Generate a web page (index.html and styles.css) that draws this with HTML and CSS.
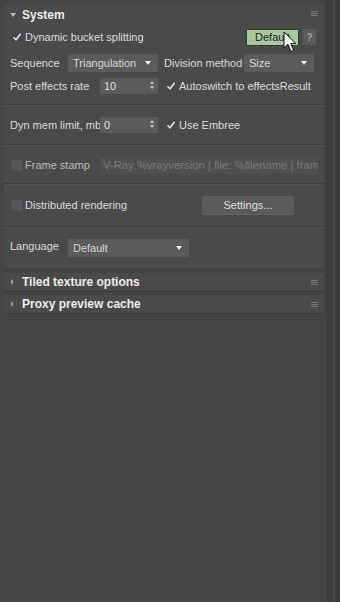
FILE: index.html
```html
<!DOCTYPE html>
<html>
<head>
<meta charset="utf-8">
<link rel="stylesheet" href="styles.css">
</head>
<body>
<div class="app">
  <div class="main">
    <section class="rollout">
      <div class="rhead">
        <span class="tri-down"></span>
        <span class="rtitle">System</span>
        <span class="grip"><i></i><i></i><i></i></span>
      </div>

      <div class="group g1">
        <div class="row r1">
          <span class="check on"><svg viewBox="0 0 10 10" width="10" height="10"><path d="M1.5 5.2 L4 7.8 L8.6 1.8" fill="none" stroke="#e6e6e6" stroke-width="1.6"/></svg></span>
          <span class="lbl">Dynamic bucket splitting</span>
          <span class="spacer"></span>
          <span class="btn-default">Default
            <svg class="cursor" viewBox="0 0 14 22" width="14" height="22"><path d="M1 1 L1 17 L5 13.2 L8 20.5 L10.6 19.4 L7.7 12.4 L12.8 12.4 Z" fill="#ffffff" stroke="#111" stroke-width="1"/></svg>
          </span>
          <span class="btn-help">?</span>
        </div>
        <div class="row r2">
          <span class="lbl w-seq">Sequence</span>
          <span class="dd dd-tri">Triangulation<span class="arr"></span></span>
          <span class="lbl w-div">Division method</span>
          <span class="dd dd-size">Size<span class="arr"></span></span>
        </div>
        <div class="row r3">
          <span class="lbl w-post">Post effects rate</span>
          <span class="spin">10<span class="spinarr"><i class="up"></i><i class="dn"></i></span></span>
          <span class="check on c2"><svg viewBox="0 0 10 10" width="10" height="10"><path d="M1.5 5.2 L4 7.8 L8.6 1.8" fill="none" stroke="#e6e6e6" stroke-width="1.6"/></svg></span>
          <span class="lbl">Autoswitch to effectsResult</span>
        </div>
      </div>

      <div class="group g2">
        <div class="row">
          <span class="lbl w-post clip">Dyn mem limit, mb</span>
          <span class="spin">0<span class="spinarr"><i class="up"></i><i class="dn"></i></span></span>
          <span class="check on c2"><svg viewBox="0 0 10 10" width="10" height="10"><path d="M1.5 5.2 L4 7.8 L8.6 1.8" fill="none" stroke="#e6e6e6" stroke-width="1.6"/></svg></span>
          <span class="lbl">Use Embree</span>
        </div>
      </div>

      <div class="group g3">
        <div class="row">
          <span class="check off"></span>
          <span class="lbl dis w-fs">Frame stamp</span>
          <span class="field">V-Ray %vrayversion | file: %filename | fram</span>
        </div>
      </div>

      <div class="group g4">
        <div class="row">
          <span class="check off"></span>
          <span class="lbl w-dr">Distributed rendering</span>
          <span class="btn">Settings...</span>
        </div>
      </div>

      <div class="group g5">
        <div class="row">
          <span class="lbl w-seq">Language</span>
          <span class="dd dd-lang">Default<span class="arr"></span></span>
        </div>
      </div>
    </section>

    <section class="rollout closed">
      <div class="rhead">
        <span class="tri-right"></span>
        <span class="rtitle">Tiled texture options</span>
        <span class="grip"><i></i><i></i><i></i></span>
      </div>
    </section>

    <section class="rollout closed">
      <div class="rhead">
        <span class="tri-right"></span>
        <span class="rtitle">Proxy preview cache</span>
        <span class="grip"><i></i><i></i><i></i></span>
      </div>
    </section>
  </div>
  <div class="scroll"><div class="track"></div></div>
</div>
</body>
</html>
```

FILE: styles.css
```css
* { box-sizing: border-box; }
html, body {
  margin: 0;
  padding: 0;
  background: #444444;
  width: 340px;
  height: 602px;
  overflow: hidden;
}
body {
  font-family: "Liberation Sans", Arial, sans-serif;
  font-size: 11px;
  color: #dcdcdc;
}
.app {
  display: flex;
  height: 602px;
}
.main {
  width: 326px;
  padding: 4px 2px 0 4px;
  display: flex;
  flex-direction: column;
  gap: 4px;
}
.scroll {
  width: 14px;
  background: #3c3c3c;
  display: flex;
  justify-content: flex-start;
  padding-left: 7px;
}
.track {
  width: 2px;
  background: #4b4b4b;
  height: 100%;
}
.rollout {
  background: #4a4a4a;
  border-radius: 2px;
  box-shadow: 0 1px 0 #3a3a3a;
}
.rhead {
  height: 22px;
  display: flex;
  align-items: center;
  padding: 0 6px 0 6px;
}
.closed .rhead { height: 18px; }
.tri-down {
  width: 0; height: 0;
  border-left: 3px solid transparent;
  border-right: 3px solid transparent;
  border-top: 4px solid #b8b8b8;
  margin-right: 6px;
}
.tri-right {
  width: 0; height: 0;
  border-top: 3px solid transparent;
  border-bottom: 3px solid transparent;
  border-left: 3px solid #9a9a9a;
  margin-right: 8px;
  margin-left: 1px;
}
.rtitle {
  font-weight: bold;
  font-size: 12px;
  color: #ececec;
  flex: 1;
}
.grip {
  display: flex;
  flex-direction: column;
  gap: 1px;
  margin-top: -4px;
}
.closed .grip { margin-top: 1px; }
.grip i {
  display: block;
  width: 7px;
  height: 1px;
  background: #7a7a7a;
}
.group {
  border-top: 1px solid #3a3a3a;
  box-shadow: inset 0 1px 0 #525252;
  padding: 0 6px;
}
.g1 { border-top: none; box-shadow: none; padding-top: 2px; padding-bottom: 9px; }
.g2 { padding-top: 11px; padding-bottom: 10px; }
.g3 { padding-top: 11px; padding-bottom: 9px; }
.g4 { padding-top: 12px; padding-bottom: 12px; }
.g5 { padding-top: 10px; padding-bottom: 14px; }
.row {
  display: flex;
  align-items: center;
  height: 18px;
}
.r2 { margin-top: 8px; }
.r3 { margin-top: 5px; }
.lbl { white-space: nowrap; }
.dis { color: #bdbdbd; }
.w-seq { width: 58px; }
.w-div { width: 80px; margin-left: 6px; }
.w-post { width: 90px; }
.w-fs { width: 75px; }
.w-dr { width: 177px; }
.clip { overflow: hidden; }
.spacer { flex: 1; }
.check {
  width: 10px;
  height: 10px;
  margin-left: 2px;
  margin-right: 3px;
  display: inline-flex;
  background: #474747;
}
.check.off {
  background: #555555;
  border: 1px solid #5c5c5c;
}
.c2 { margin-left: 8px; }
.dd {
  position: relative;
  height: 18px;
  background: #5b5b5b;
  border-radius: 1px;
  display: flex;
  align-items: center;
  padding-left: 5px;
  color: #d8d8d8;
}
.dd-tri { width: 90px; }
.dd-size { width: 70px; }
.dd-lang { width: 121px; height: 18px; margin-top: 3px; }
.arr {
  position: absolute;
  right: 7px;
  top: 7px;
  width: 0; height: 0;
  border-left: 3px solid transparent;
  border-right: 3px solid transparent;
  border-top: 4px solid #f2f2f2;
}
.spin {
  position: relative;
  width: 58px;
  height: 16px;
  background: #5b5b5b;
  display: flex;
  align-items: center;
  padding-left: 4px;
  color: #e0e0e0;
}
.spinarr {
  position: absolute;
  right: 4px;
  top: 3px;
  display: flex;
  flex-direction: column;
  gap: 2px;
}
.spinarr i {
  display: block;
  width: 0; height: 0;
  border-left: 2.5px solid transparent;
  border-right: 2.5px solid transparent;
}
.spinarr .up { border-bottom: 3px solid #c8c8c8; }
.spinarr .dn { border-top: 3px solid #c8c8c8; }
.field {
  width: 218px;
  height: 17px;
  background: #4f4f4f;
  color: #7c7c7c;
  display: flex;
  align-items: center;
  padding-left: 3px;
  white-space: nowrap;
  overflow: hidden;
  font-size: 11.3px;
}
.btn {
  width: 92px;
  height: 19px;
  background: #5a5a5a;
  border: 1px solid #606060;
  border-radius: 2px;
  display: flex;
  align-items: center;
  justify-content: center;
  color: #e0e0e0;
}
.btn-default {
  position: relative;
  width: 53px;
  height: 17px;
  background: #a7c8a1;
  border: 1px solid #2f3a2e;
  color: #1e1e1e;
  display: flex;
  align-items: center;
  justify-content: center;
  font-size: 11px;
}
.cursor {
  position: absolute;
  left: 36px;
  top: 1px;
}
.btn-help {
  width: 13px;
  height: 16px;
  margin-left: 4px;
  margin-right: 2px;
  background: #5a5a5a;
  color: #a0a0a0;
  display: flex;
  align-items: center;
  justify-content: center;
  font-size: 10px;
  font-weight: bold;
}
```
